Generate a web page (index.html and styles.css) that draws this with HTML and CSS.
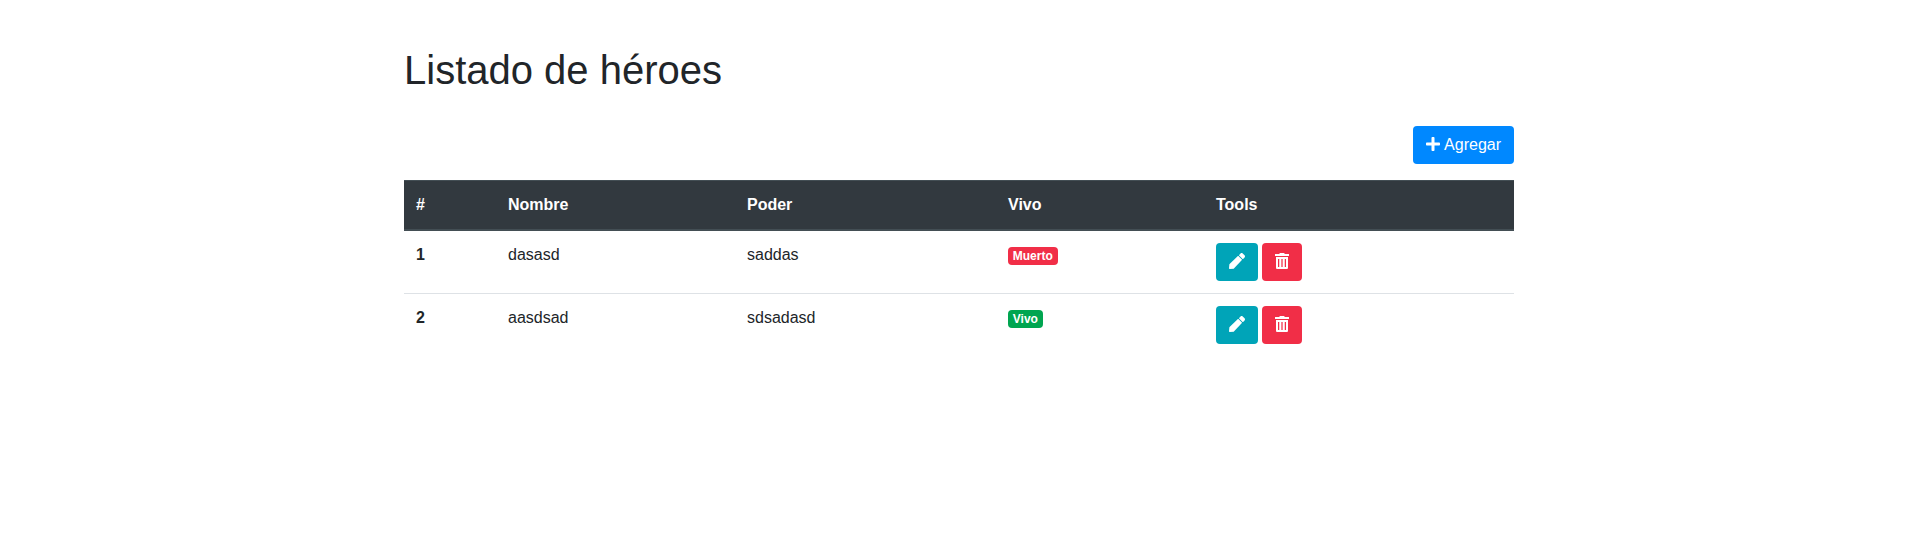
FILE: index.html
```html
<!DOCTYPE html>
<html lang="es">
<head>
<meta charset="utf-8">
<title>Listado de héroes</title>
<link rel="stylesheet" href="styles.css">
</head>
<body>
<svg class="sprite" aria-hidden="true">
  <symbol id="plus" viewBox="0 0 448 512"><path d="M416 208H272V64c0-17.67-14.33-32-32-32h-32c-17.67 0-32 14.33-32 32v144H32c-17.67 0-32 14.33-32 32v32c0 17.67 14.33 32 32 32h144v144c0 17.67 14.33 32 32 32h32c17.67 0 32-14.33 32-32V304h144c17.67 0 32-14.33 32-32v-32c0-17.67-14.33-32-32-32z"/></symbol>
  <symbol id="pencil" viewBox="0 0 512 512"><path d="M497.9 142.1l-46.1 46.1c-4.7 4.7-12.3 4.7-17 0l-111-111c-4.7-4.7-4.7-12.3 0-17l46.1-46.1c18.7-18.7 49.1-18.7 67.9 0l60.1 60.1c18.8 18.7 18.8 49.1 0 67.9zM284.2 99.8L12 362.400L0 490c0 14 8 22 22 22l127.700-12 262.600-272.900c4.700-4.700 4.700-12.300 0-17l-111-111c-4.800-4.700-12.400-4.700-17.100 0z"/></symbol>
  <symbol id="trash" viewBox="0 0 448 512"><path d="M0 88V40c0-4.400 3.600-8 8-8h128l9.400-18.700C149.400 5.100 157.700 0 166.800 0h114.300c9.100 0 17.400 5.100 21.500 13.300L312 32h128c4.400 0 8 3.600 8 8v48c0 4.400-3.600 8-8 8H8c-4.400 0-8-3.600-8-8zM32 128h384v344c0 22-18 40-40 40H72c-22 0-40-18-40-40zm64 64v256h40V192zm108 0v256h40V192zm108 0v256h40V192z" fill-rule="evenodd"/></symbol>
</svg>
<main class="container">
  <h1 class="title">Listado de héroes</h1>
  <div class="toolbar">
    <button class="btn btn-primary"><svg class="icon icon-lead"><use href="#plus"/></svg> Agregar</button>
  </div>
  <table class="table">
    <colgroup><col class="col-id"><col class="col-name"><col class="col-power"><col class="col-alive"><col class="col-tools"></colgroup>
    <thead>
      <tr><th>#</th><th>Nombre</th><th>Poder</th><th>Vivo</th><th>Tools</th></tr>
    </thead>
    <tbody>
      <tr>
        <th>1</th><td>dasasd</td><td>saddas</td>
        <td><span class="badge badge-danger">Muerto</span></td>
        <td><div class="tools"><button class="btn btn-info" aria-label="Editar"><svg class="icon icon-wide"><use href="#pencil"/></svg></button><button class="btn btn-danger" aria-label="Borrar"><svg class="icon"><use href="#trash"/></svg></button></div></td>
      </tr>
      <tr>
        <th>2</th><td>aasdsad</td><td>sdsadasd</td>
        <td><span class="badge badge-success">Vivo</span></td>
        <td><div class="tools"><button class="btn btn-info" aria-label="Editar"><svg class="icon icon-wide"><use href="#pencil"/></svg></button><button class="btn btn-danger" aria-label="Borrar"><svg class="icon"><use href="#trash"/></svg></button></div></td>
      </tr>
    </tbody>
  </table>
</main>
</body>
</html>
```
FILE: styles.css
```css
*, *::before, *::after { box-sizing: border-box; }
body {
  margin: 0;
  background: #fff;
  color: #212529;
  font: 400 16px/1.5 "Liberation Sans", Arial, sans-serif;
}
.sprite { display: none; }
.container { width: 1110px; margin-left: 404px; padding-top: 46px; }
.title { margin: 0 0 32px; font-size: 40px; font-weight: 500; line-height: 48px; }
.toolbar { display: flex; justify-content: flex-end; margin-bottom: 16px; }
.btn {
  display: inline-block;
  height: 38px;
  padding: 6px 12px;
  border: 1px solid transparent;
  border-radius: 4px;
  color: #fff;
  font: inherit;
}
.btn-primary { background: #0088ff; }
.btn-info { background: #00a4b8; }
.btn-danger { background: #f12e47; }
.icon { width: 14px; height: 16px; fill: currentColor; vertical-align: -2px; }
.icon-wide { width: 16px; }
.icon-lead { margin-right: 1px; }
.table { width: 100%; table-layout: fixed; border-collapse: collapse; }
.col-id { width: 92px; }
.col-name { width: 239px; }
.col-power { width: 261px; }
.col-alive { width: 208px; }
.col-tools { width: 310px; }
.table th, .table td {
  padding: 12px;
  border-top: 1px solid #dee2e6;
  text-align: left;
  vertical-align: top;
}
.table thead th {
  background: #32393f;
  border-color: #434e54;
  border-bottom: 2px solid #434e54;
  color: #fff;
}
.tools { display: flex; gap: 4px; }
.badge {
  display: inline-block;
  padding: 3px 4.8px;
  border-radius: 4px;
  color: #fff;
  font-size: 12px;
  font-weight: 700;
  line-height: 1;
  vertical-align: baseline;
}
.badge-danger { background: #f12e47; }
.badge-success { background: #00a550; }
```
